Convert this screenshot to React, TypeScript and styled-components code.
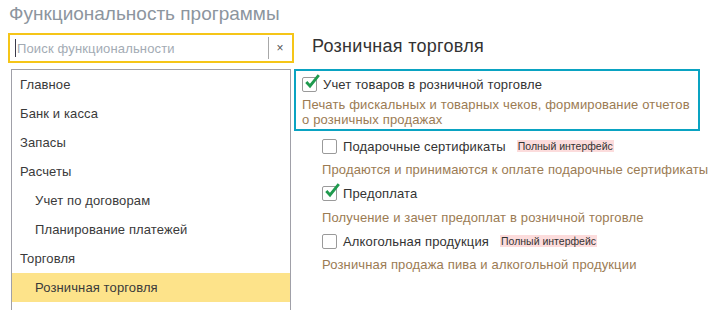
import React from "react";
import styled, { createGlobalStyle } from "styled-components";

const Global = createGlobalStyle`
  html, body { margin: 0; padding: 0; background: #fff; }
  body { font-family: "Liberation Sans", Arial, sans-serif; }
  * { box-sizing: border-box; }
`;

const Page = styled.div`
  width: 713px;
  height: 310px;
  overflow: hidden;
  position: relative;
`;

const Title = styled.div`
  font-size: 19px;
  line-height: 22px;
  color: #8c959e;
  padding: 3px 0 0 9px;
  height: 33px;
`;

const Main = styled.div`
  display: flex;
  align-items: flex-start;
`;

const LeftCol = styled.div`
  width: 286px;
  margin-left: 8px;
  display: flex;
  flex-direction: column;
`;

const SearchBox = styled.div`
  height: 30px;
  border: 2px solid #f5c518;
  display: flex;
  align-items: center;
  padding-left: 5px;
`;

const Caret = styled.span`
  width: 1px;
  height: 18px;
  background: #3a3a4a;
  flex: none;
`;

const SearchInput = styled.input`
  flex: 1;
  min-width: 0;
  border: none;
  outline: none;
  padding: 0 0 0 1px;
  font-family: "Liberation Sans", Arial, sans-serif;
  font-size: 13px;
  letter-spacing: 0.15px;
  color: #333;
  background: transparent;
  &::placeholder { color: #a3abb4; }
`;

const ClearButton = styled.div`
  width: 23px;
  height: 22px;
  border-left: 1px solid #a8a8a8;
  display: flex;
  align-items: center;
  justify-content: center;
  font-size: 12px;
  color: #555;
  margin-right: 1px;
`;

const List = styled.div`
  margin: 6px 3px 0 3px;
  border: 1px solid #a0a0a8;
  border-bottom: none;
  height: 260px;
`;

const ListItem = styled.div<{ $level: number; $selected?: boolean }>`
  height: 29px;
  display: flex;
  align-items: center;
  padding-left: ${(p) => (p.$level === 0 ? 8 : 23)}px;
  font-size: 13px;
  letter-spacing: 0.12px;
  color: #3a3a3a;
  background: ${(p) => (p.$selected ? "#fde38a" : "transparent")};
`;

const RightCol = styled.div`
  flex: 1;
  display: flex;
  flex-direction: column;
`;

const Heading = styled.div`
  font-size: 18px;
  letter-spacing: 0.28px;
  line-height: 26px;
  color: #333;
  padding-left: 18px;
  height: 26px;
`;

const FocusBox = styled.div`
  margin-top: 10px;
  width: 406px;
  height: 62px;
  border: 2px solid #0aa3c2;
  padding: 3px 6px 0 6px;
`;

const Option = styled.div`
  display: flex;
  flex-direction: column;
`;

const OptionRow = styled.div`
  display: flex;
  align-items: center;
  height: 20px;
  font-size: 13px;
  letter-spacing: 0.15px;
  color: #333;
`;

const Box = styled.span`
  position: relative;
  width: 15px;
  height: 15px;
  border: 1px solid #9a9a9a;
  border-radius: 2px;
  background: #fff;
  flex: none;
  margin-right: 6px;
`;

const CheckMark = styled.svg`
  position: absolute;
  left: 1px;
  top: -4px;
  width: 16px;
  height: 16px;
  overflow: visible;
`;

const Badge = styled.span`
  margin-left: 11px;
  background: #fcdcdc;
  font-size: 10.5px;
  letter-spacing: 0;
  line-height: 12px;
  height: 12px;
  padding: 0 1px;
  color: #333;
`;

const Desc = styled.div<{ $gap?: number }>`
  margin-top: ${(p) => p.$gap ?? 5}px;
  font-size: 13px;
  letter-spacing: 0.15px;
  line-height: 15px;
  color: #9b7b53;
`;

const Options = styled.div`
  display: flex;
  flex-direction: column;
  gap: 6.5px;
  margin-top: 5px;
  padding-left: 28px;
`;

const Checkbox = ({ checked }: { checked?: boolean }) => (
  <Box>
    {checked && (
      <CheckMark viewBox="0 0 16 16">
        <path
          d="M2.3 8 L6 12 L14.8 1.2"
          fill="none"
          stroke="#1f9a4e"
          strokeWidth="2.8"
          strokeLinecap="butt"
          strokeLinejoin="miter"
        />
      </CheckMark>
    )}
  </Box>
);

const sections = [
  { label: "Главное", level: 0 },
  { label: "Банк и касса", level: 0 },
  { label: "Запасы", level: 0 },
  { label: "Расчеты", level: 0 },
  { label: "Учет по договорам", level: 1 },
  { label: "Планирование платежей", level: 1 },
  { label: "Торговля", level: 0 },
  { label: "Розничная торговля", level: 1, selected: true },
];

const options = [
  {
    label: "Подарочные сертификаты",
    badge: true,
    checked: false,
    desc: "Продаются и принимаются к оплате подарочные сертификаты",
  },
  {
    label: "Предоплата",
    badge: false,
    checked: true,
    desc: "Получение и зачет предоплат в розничной торговле",
  },
  {
    label: "Алкогольная продукция",
    badge: true,
    checked: false,
    desc: "Розничная продажа пива и алкогольной продукции",
  },
];

export default function App() {
  return (
    <Page>
      <Global />
      <Title>Функциональность программы</Title>
      <Main>
        <LeftCol>
          <SearchBox>
            <Caret />
            <SearchInput placeholder="Поиск функциональности" />
            <ClearButton>×</ClearButton>
          </SearchBox>
          <List>
            {sections.map((s) => (
              <ListItem key={s.label} $level={s.level} $selected={s.selected}>
                {s.label}
              </ListItem>
            ))}
          </List>
        </LeftCol>
        <RightCol>
          <Heading>Розничная торговля</Heading>
          <FocusBox>
            <Option>
              <OptionRow>
                <Checkbox checked />
                Учет товаров в розничной торговле
              </OptionRow>
              <Desc $gap={3}>
                Печать фискальных и товарных чеков, формирование отчетов
                <br />о розничных продажах
              </Desc>
            </Option>
          </FocusBox>
          <Options>
            {options.map((o) => (
              <Option key={o.label}>
                <OptionRow>
                  <Checkbox checked={o.checked} />
                  {o.label}
                  {o.badge && <Badge>Полный интерфейс</Badge>}
                </OptionRow>
                <Desc $gap={6}>{o.desc}</Desc>
              </Option>
            ))}
          </Options>
        </RightCol>
      </Main>
    </Page>
  );
}
